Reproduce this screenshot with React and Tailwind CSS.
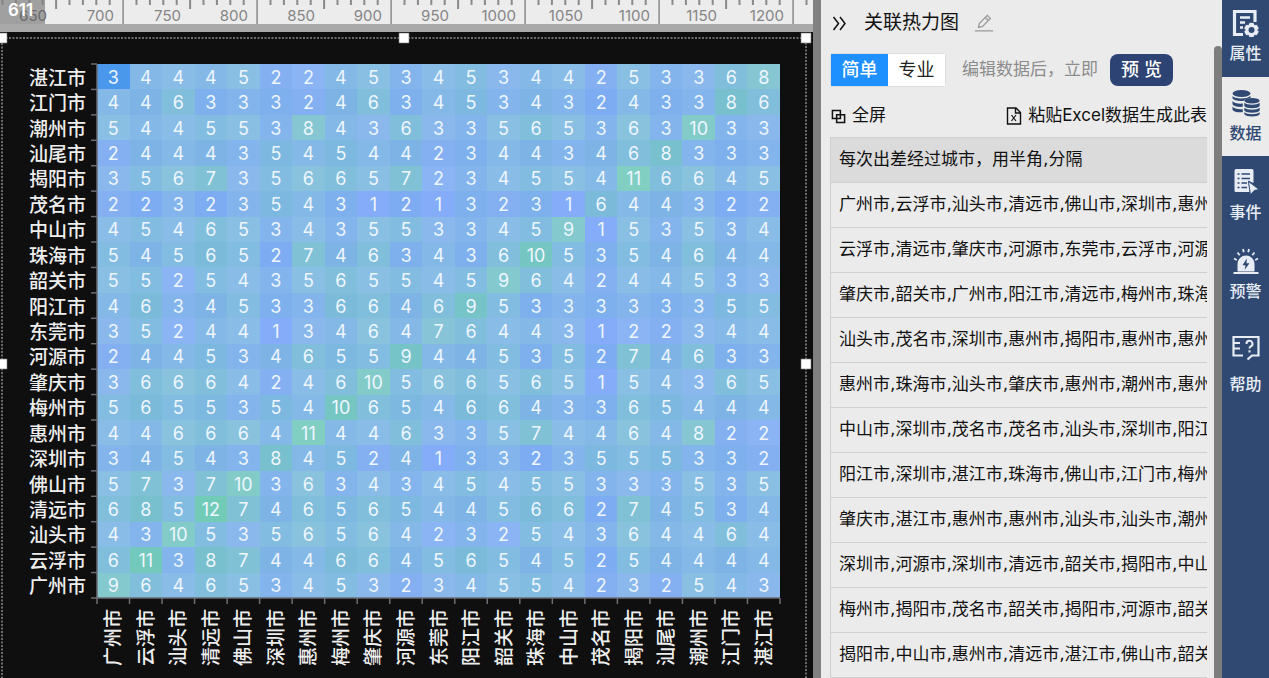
import { useState } from "react";

const CITIES = [
  "广州市", "云浮市", "汕头市", "清远市", "佛山市", "深圳市", "惠州市",
  "梅州市", "肇庆市", "河源市", "东莞市", "阳江市", "韶关市", "珠海市",
  "中山市", "茂名市", "揭阳市", "汕尾市", "潮州市", "江门市", "湛江市",
];

// top row is 湛江市, bottom row is 广州市
const MATRIX = [
  [3, 4, 4, 4, 5, 2, 2, 4, 5, 3, 4, 5, 3, 4, 4, 2, 5, 3, 3, 6, 8],
  [4, 4, 6, 3, 3, 3, 2, 4, 6, 3, 4, 5, 3, 4, 3, 2, 4, 3, 3, 8, 6],
  [5, 4, 4, 5, 5, 3, 8, 4, 3, 6, 3, 3, 5, 6, 5, 3, 6, 3, 10, 3, 3],
  [2, 4, 4, 4, 3, 5, 4, 5, 4, 4, 2, 3, 4, 4, 3, 4, 6, 8, 3, 3, 3],
  [3, 5, 6, 7, 3, 5, 6, 6, 5, 7, 2, 3, 4, 5, 5, 4, 11, 6, 6, 4, 5],
  [2, 2, 3, 2, 3, 5, 4, 3, 1, 2, 1, 3, 2, 3, 1, 6, 4, 4, 3, 2, 2],
  [4, 5, 4, 6, 5, 3, 4, 3, 5, 5, 3, 3, 4, 5, 9, 1, 5, 3, 5, 3, 4],
  [5, 4, 5, 6, 5, 2, 7, 4, 6, 3, 4, 3, 6, 10, 5, 3, 5, 4, 6, 4, 4],
  [5, 5, 2, 5, 4, 3, 5, 6, 5, 5, 4, 5, 9, 6, 4, 2, 4, 4, 5, 3, 3],
  [4, 6, 3, 4, 5, 3, 3, 6, 6, 4, 6, 9, 5, 3, 3, 3, 3, 3, 3, 5, 5],
  [3, 5, 2, 4, 4, 1, 3, 4, 6, 4, 7, 6, 4, 4, 3, 1, 2, 2, 3, 4, 4],
  [2, 4, 4, 5, 3, 4, 6, 5, 5, 9, 4, 4, 5, 3, 5, 2, 7, 4, 6, 3, 3],
  [3, 6, 6, 6, 4, 2, 4, 6, 10, 5, 6, 6, 5, 6, 5, 1, 5, 4, 3, 6, 5],
  [5, 6, 5, 5, 3, 5, 4, 10, 6, 5, 4, 6, 6, 4, 3, 3, 6, 5, 4, 4, 4],
  [4, 4, 6, 6, 6, 4, 11, 4, 4, 6, 3, 3, 5, 7, 4, 4, 6, 4, 8, 2, 2],
  [3, 4, 5, 4, 3, 8, 4, 5, 2, 4, 1, 3, 3, 2, 3, 5, 5, 5, 3, 3, 2],
  [5, 7, 3, 7, 10, 3, 6, 3, 4, 3, 4, 5, 4, 5, 5, 3, 3, 3, 5, 3, 5],
  [6, 8, 5, 12, 7, 4, 6, 5, 6, 5, 4, 4, 5, 6, 6, 2, 7, 4, 5, 3, 4],
  [4, 3, 10, 5, 3, 5, 6, 5, 6, 4, 2, 3, 2, 5, 4, 3, 6, 4, 4, 6, 4],
  [6, 11, 3, 8, 7, 4, 4, 6, 6, 4, 5, 6, 5, 4, 5, 2, 5, 4, 4, 4, 4],
  [9, 6, 4, 6, 5, 3, 4, 5, 3, 2, 3, 4, 5, 5, 4, 2, 3, 2, 5, 4, 3],
];

const TRIPS = [
  "广州市,云浮市,汕头市,清远市,佛山市,深圳市,惠州市",
  "云浮市,清远市,肇庆市,河源市,东莞市,云浮市,河源市",
  "肇庆市,韶关市,广州市,阳江市,清远市,梅州市,珠海市",
  "汕头市,茂名市,深圳市,惠州市,揭阳市,惠州市,惠州市",
  "惠州市,珠海市,汕头市,肇庆市,惠州市,潮州市,惠州市",
  "中山市,深圳市,茂名市,茂名市,汕头市,深圳市,阳江市",
  "阳江市,深圳市,湛江市,珠海市,佛山市,江门市,梅州市",
  "肇庆市,湛江市,惠州市,惠州市,汕头市,汕头市,潮州市",
  "深圳市,河源市,深圳市,清远市,韶关市,揭阳市,中山市",
  "梅州市,揭阳市,茂名市,韶关市,揭阳市,河源市,韶关市",
  "揭阳市,中山市,惠州市,清远市,湛江市,佛山市,韶关市",
];

const GRID = { left: 95, top: 26, width: 683, height: 534 };
const CELL_W = GRID.width / 21;
const CELL_H = GRID.height / 21;

const STOPS = [
  [1, [126, 168, 248]],
  [5, [124, 184, 223]],
  [12, [114, 203, 182]],
];

// value ramp plus a faint light stripe on every other row and column
function cellColor(value, row, col) {
  const [a, b] = value <= 5 ? [STOPS[0], STOPS[1]] : [STOPS[1], STOPS[2]];
  const t = (value - a[0]) / (b[0] - a[0]);
  const light = (row % 2 === 0 ? 0.05 : 0) + (col % 2 === 0 ? 0.05 : 0);
  const rgb = a[1].map((c, i) => {
    const v = c + (b[1][i] - c) * t;
    return Math.round(v + (255 - v) * light);
  });
  return `rgb(${rgb.join(",")})`;
}

function Ruler() {
  const ticks = Array.from({ length: 62 }, (_, i) => i);
  const labels = Array.from({ length: 12 }, (_, i) => 650 + i * 50);
  return (
    <svg className="block h-6 w-full shrink-0 bg-[#ececec]" aria-hidden="true">
      {ticks.map((i) => {
        const x = 2.5 + i * 13.4;
        const major = i % 10 === 9;
        const mid = i % 10 === 4;
        return (
          <path
            key={i}
            d={`M${x} 0V${major ? 24 : mid ? 9 : 5}`}
            stroke="#8a8a8a"
            strokeWidth={major ? 1.5 : 2}
          />
        );
      })}
      <rect x="0" y="0" width="45" height="24" fill="#808080" fillOpacity="0.7" />
      {labels.map((n, i) => (
        <text
          key={n}
          x={47 + i * 67}
          y="21"
          textAnchor="end"
          className={`text-[15px] ${i === 0 ? "fill-[#6a6a6a]" : "fill-[#858585]"}`}
        >
          {n}
        </text>
      ))}
      <text x="8" y="16" className="fill-white text-[17px] font-semibold">
        611
      </text>
    </svg>
  );
}

function Heatmap() {
  const right = GRID.left + GRID.width;
  const bottom = GRID.top + GRID.height;
  const marks = Array.from({ length: 22 }, (_, i) => i);
  return (
    <svg viewBox="0 0 804 652" className="block h-auto w-full overflow-visible" role="img" aria-label="关联热力图">
      <g shapeRendering="crispEdges">
        {MATRIX.map((row, r) =>
          row.map((value, c) => (
            <rect
              key={`${r}-${c}`}
              x={GRID.left + c * CELL_W}
              y={GRID.top + r * CELL_H}
              width={CELL_W}
              height={CELL_H}
              fill={r === 0 && c === 0 ? "#4a98ec" : cellColor(value, r, c)}
            />
          )),
        )}
      </g>
      {MATRIX.map((row, r) =>
        row.map((value, c) => (
          <text
            key={`${r}-${c}`}
            x={GRID.left + (c + 0.5) * CELL_W}
            y={GRID.top + (r + 0.5) * CELL_H + 7}
            textAnchor="middle"
            className="fill-[#eef6ff] text-[18px]"
          >
            {value}
          </text>
        )),
      )}

      <g stroke="#6b6e76" strokeWidth="1.5">
        <path d={`M${GRID.left} ${GRID.top}V${bottom}H${right}`} fill="none" />
        {marks.map((i) => (
          <path key={`y${i}`} d={`M${GRID.left - 6} ${GRID.top + i * CELL_H}h6`} />
        ))}
        {marks.map((i) => (
          <path key={`x${i}`} d={`M${GRID.left + i * CELL_W} ${bottom}v6`} />
        ))}
      </g>

      {[...CITIES].reverse().map((name, i) => (
        <text
          key={name}
          x={84}
          y={GRID.top + (i + 0.5) * CELL_H + 8}
          textAnchor="end"
          className="fill-[#eeeeee] text-[19px] font-medium"
        >
          {name}
        </text>
      ))}
      {CITIES.map((name, i) => (
        <text
          key={name}
          transform={`translate(${GRID.left + (i + 0.5) * CELL_W + 7} 571) rotate(-90)`}
          textAnchor="end"
          className="fill-[#eeeeee] text-[19px] font-medium"
        >
          {name}
        </text>
      ))}

      <rect width="804" height="652" fill="none" stroke="#c8c8c8" strokeDasharray="2 1.5" />
      {[[0, 0], [402, 0], [804, 0], [0, 326], [804, 326]].map(([x, y]) => (
        <rect key={`${x}-${y}`} x={x - 5} y={y - 5} width="10" height="10" fill="#fff" stroke="#777" strokeWidth="0.6" />
      ))}
    </svg>
  );
}

function CollapseIcon(props) {
  return (
    <svg viewBox="0 0 16 16" fill="none" stroke="currentColor" strokeWidth="1.5" {...props}>
      <path d="M1.5 2 6.500 8.500l-5 6.500M8 2l5 6.500L8 15" />
    </svg>
  );
}

function EditIcon(props) {
  return (
    <svg viewBox="0 0 18 18" fill="none" stroke="currentColor" strokeWidth="1.3" {...props}>
      <path d="M0 16.800h18M3.500 13.400l.8-3.800L12.300 1.400l3 3-8 8.200zM10.300 3.500l3 3" />
    </svg>
  );
}

function FullscreenIcon(props) {
  return (
    <svg viewBox="0 0 16 16" fill="none" stroke="currentColor" strokeWidth="1.6" {...props}>
      <path d="M1.500 1.500h8.500v8.500H1.500zM6 6h8.500v8.500H6z" />
    </svg>
  );
}

function ExcelIcon(props) {
  return (
    <svg viewBox="0 0 16 18" fill="none" stroke="currentColor" strokeWidth="1.4" {...props}>
      <path d="M1.500 1h8.500l4.500 4.500V17h-13zM9.500 1v5h5" />
      <path d="M5.500 8l4.500 6M10 8l-4.500 6" strokeWidth="1.2" />
    </svg>
  );
}

function PropsIcon(props) {
  return (
    <svg viewBox="0 0 28 28" fill="none" stroke="currentColor" {...props}>
      <path d="M11 25.500H2.500v-23H23V13" strokeWidth="3.200" />
      <path d="M8 8.500h10M8 13.500h5M8 18.500h3" strokeWidth="2.400" />
      <path
        d="M17.300 13.500h4.400l.9 2.200 2.400-.2 2.200 3.700-1.500 1.800 1.500 1.800-2.200 3.700-2.400-.2-.9 2.200h-4.400l-.9-2.200-2.400.2-2.200-3.700 1.500-1.800-1.500-1.800 2.200-3.700 2.400.2z"
        fill="currentColor"
        stroke="#2f4973"
        strokeWidth=".8"
      />
      <circle cx="19.500" cy="21" r="3" fill="#2f4973" stroke="none" />
    </svg>
  );
}

function DataIcon(props) {
  return (
    <svg viewBox="0 0 28 28" fill="currentColor" {...props}>
      <ellipse cx="9.500" cy="4.500" rx="9" ry="3.500" />
      <path d="M.5 6.800c2 3.400 14 3.800 18 .2v2.200c-3 .3-5.500 1-6.700 2.600C6.500 12.400 2 11.500.5 9.500zM.5 12c1.500 2 5.500 3 10.300 2.600v3.200C6 18.200 2 17.400.5 15.300zM.5 17.600c1.500 2 5.500 3 10.300 2.600v3C6 23.700 2 22.800.5 20.700z" />
      <ellipse cx="20" cy="11.800" rx="7.700" ry="2.800" />
      <path d="M12.300 13.700c2.500 2.600 13 2.600 15.400 0v3.200c-2 3-13.400 3-15.400 0zM12.300 18.700c2.500 2.600 13 2.600 15.400 0v2.900c-2 3-13.400 3-15.400 0zM12.300 23.300c2.500 2.500 13 2.500 15.400 0v2c-2 3-13.400 3-15.400 0z" />
    </svg>
  );
}

function EventIcon(props) {
  return (
    <svg viewBox="0 0 28 28" fill="none" stroke="currentColor" {...props}>
      <path d="M4 1h16a1.500 1.500 0 0 1 1.500 1.500V15L16 12.500 17.500 24H4a1.500 1.500 0 0 1-1.500-1.500v-20A1.500 1.500 0 0 1 4 1z" fill="currentColor" stroke="none" />
      <path d="M5.500 6h2M9.500 6H18M5.500 10.500h2M9.500 10.500H18M5.500 15h2M9.500 15H15M5.500 19.500h2M9.500 19.500H15" stroke="#2f4973" strokeWidth="1.500" />
      <path d="M16.500 13.500 27 21.500l-4.500.8-4 4.200z" fill="currentColor" stroke="#2f4973" strokeWidth=".8" />
    </svg>
  );
}

function AlertIcon(props) {
  return (
    <svg viewBox="0 0 28 28" fill="none" stroke="currentColor" {...props}>
      <path d="M1.500 26h25" strokeWidth="2" />
      <path d="M5.500 24.500V17a8.500 8.500 0 0 1 17 0v7.500z" fill="currentColor" stroke="none" />
      <path d="M14.800 11.500 10.500 18.300h3l-.8 4.500 4.800-6.600h-3z" fill="#2f4973" stroke="none" />
      <path d="M2 11.500l2.800 1.500M5.500 5.500l2.200 2.700M11 2l.8 3.300M17 2l-.8 3.300M22.500 5.500l-2.200 2.700M26 11.500l-2.800 1.500" strokeWidth="1.800" />
    </svg>
  );
}

function HelpIcon(props) {
  return (
    <svg viewBox="0 0 28 28" fill="none" stroke="currentColor" strokeWidth="2.200" {...props}>
      <path d="M11 21.500H1.500V3h25v18.500H20l-4.500 4" />
      <path d="M1.500 9h6.500M1.500 14.500H8" />
      <path d="M14.500 10a3 3 0 1 1 4.300 2.400c-1 .6-1.300 1-1.300 2.200M17.500 16.300v2.200" strokeWidth="2" />
    </svg>
  );
}

const RAIL = [
  { name: "属性", Icon: PropsIcon, box: "h-[77px] gap-1.5 pt-[9px]" },
  { name: "数据", Icon: DataIcon, box: "h-[79px] gap-1.5 pt-3" },
  { name: "事件", Icon: EventIcon, box: "h-[79px] gap-1.5 pt-3" },
  { name: "预警", Icon: AlertIcon, box: "h-[79px] gap-1.5 pt-3" },
  { name: "帮助", Icon: HelpIcon, box: "h-[92px] gap-3 pt-5" },
];

export default function App() {
  const [mode, setMode] = useState("简单");
  const [tab, setTab] = useState("数据");

  return (
    <div className="flex h-screen overflow-hidden bg-[#ebebeb] text-[#111111] [font-family:Inter,'Noto_Sans_CJK_SC',sans-serif]">
      <main className="flex min-w-0 flex-1 flex-col overflow-hidden bg-[#0f0f0f]">
        <Ruler />
        <div className="h-2 shrink-0 bg-[#a9a9a9]" />
        <div className="min-h-0 flex-1 overflow-hidden pt-1.5 pr-[7px] pl-0.5">
          <Heatmap />
        </div>
      </main>

      <div className="w-2 shrink-0 bg-[#808080]" />

      <aside className="flex w-[401px] shrink-0">
        <div className="flex min-w-0 flex-1 flex-col overflow-hidden pr-[7px] pl-[9px]">
          <header className="flex h-[45px] shrink-0 items-center">
            <button type="button" aria-label="收起" className="pl-0.5">
              <CollapseIcon className="h-4 w-4" />
            </button>
            <h1 className="ml-4 text-[19px] leading-6">关联热力图</h1>
            <button type="button" aria-label="重命名" className="ml-4 text-[#999999]">
              <EditIcon className="h-[18px] w-[18px]" />
            </button>
          </header>

          <div className="mt-2 flex h-[34px] shrink-0 items-center">
            <div className="flex rounded-sm border border-[#dddddd]">
              {["简单", "专业"].map((name) => (
                <button
                  key={name}
                  type="button"
                  aria-pressed={mode === name}
                  onClick={() => setMode(name)}
                  className={`h-8 w-[57px] text-[18px] leading-8 ${
                    mode === name ? "bg-[#1e90ff] font-medium text-white" : "bg-white text-[#222222]"
                  }`}
                >
                  {name}
                </button>
              ))}
            </div>
            <span className="ml-4 text-[17px] whitespace-nowrap text-[#8c8c8c]">编辑数据后，立即</span>
            <button type="button" className="ml-3 h-8 w-[63px] rounded-lg bg-[#2d4373] text-[18px] leading-8 font-medium text-white">
              预 览
            </button>
          </div>

          <div className="flex h-[50px] shrink-0 items-center justify-between pt-2 text-[17px]">
            <button type="button" className="flex items-center gap-1.5 pl-px">
              <FullscreenIcon className="h-[15px] w-[15px]" />
              全屏
            </button>
            <button type="button" className="flex items-center gap-1.5 whitespace-nowrap">
              <ExcelIcon className="h-[18px] w-4" />
              粘贴Excel数据生成此表
            </button>
          </div>

          <table className="w-full table-fixed border-collapse text-left text-[17px] [font-family:'DejaVu_Sans','Noto_Sans_CJK_SC',sans-serif]">
            <thead>
              <tr className="h-[45px] border border-r-0 border-[#cfcfcf] bg-[#dbdbdb]">
                <th className="overflow-hidden pl-2 font-normal whitespace-nowrap">每次出差经过城市，用半角,分隔</th>
              </tr>
            </thead>
            <tbody>
              {TRIPS.map((trip) => (
                <tr key={trip} className="h-[45px] border border-r-0 border-[#cfcfcf]">
                  <td className="overflow-hidden pl-2 whitespace-nowrap">{trip}</td>
                </tr>
              ))}
            </tbody>
          </table>
        </div>
        <div className="mt-[46px] w-2 shrink-0 rounded-t bg-[#7d7d7d]" />
      </aside>

      <nav className="flex w-[47px] shrink-0 flex-col bg-[#2f4973]">
        {RAIL.map(({ name, Icon, box }) => (
          <button
            key={name}
            type="button"
            onClick={() => setTab(name)}
            className={`flex flex-col items-center ${box} ${
              tab === name ? "bg-[#ebebeb] text-[#2f4973]" : "text-[#e8edf5]"
            }`}
          >
            <Icon className="h-7 w-7" />
            <span className="text-[16px] leading-5 font-medium">{name}</span>
          </button>
        ))}
      </nav>
    </div>
  );
}
